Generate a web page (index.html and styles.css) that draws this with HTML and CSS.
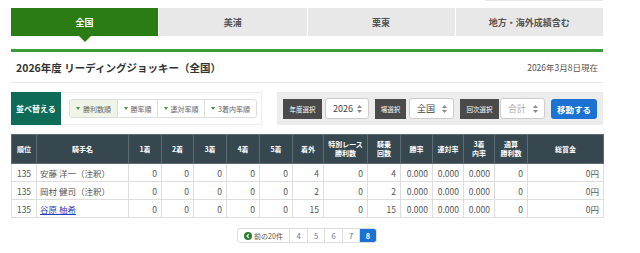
FILE: index.html
```html
<!DOCTYPE html>
<html lang="ja">
  <head>
    <meta charset="UTF-8" />
    <meta name="viewport" content="width=device-width, initial-scale=1.0" />
    <title>リーディングジョッキー</title>
    <link rel="stylesheet" href="styles.css">
  </head>
  <body>
    <div class="page">
      <div class="topbar"><div class="search-edge"></div></div>

      <ul class="tabs">
        <li class="tab active">全国</li>
        <li class="tab">美浦</li>
        <li class="tab">栗東</li>
        <li class="tab">地方・海外成績含む</li>
      </ul>
      <div class="rule"></div>

      <div class="heading">
        <h1>2026年度 リーディングジョッキー（全国）</h1>
        <span class="date">2026年3月8日現在</span>
      </div>

      <div class="controls">
        <div class="sort">
          <span class="sort-label">並べ替える</span>
          <div class="sort-btns">
            <span class="sort-btn current w47">勝利数順</span>
            <span class="sort-btn w40">勝率順</span>
            <span class="sort-btn w47">連対率順</span>
            <span class="sort-btn w52">3着内率順</span>
          </div>
        </div>

        <div class="filter">
          <span class="f-label w39">年度選択</span>
          <span class="f-select w44">2026<svg class="arrows" viewBox="0 0 5 8" width="5" height="8"><polygon points="0,3 2.5,0 5,3" /><polygon points="0,5 2.5,8 5,5" /></svg></span>
          <span class="f-label w31">場選択</span>
          <span class="f-select w45">全国<svg class="arrows" viewBox="0 0 5 8" width="5" height="8"><polygon points="0,3 2.5,0 5,3" /><polygon points="0,5 2.5,8 5,5" /></svg></span>
          <span class="f-label w39 tight">回次選択</span>
          <span class="f-select w45 disabled">合計<svg class="arrows" viewBox="0 0 5 8" width="5" height="8"><polygon points="0,3 2.5,0 5,3" /><polygon points="0,5 2.5,8 5,5" /></svg></span>
          <span class="go-btn">移動する</span>
        </div>
      </div>

      <table class="ranking">
        <colgroup>
          <col style="width:25px"><col style="width:92px"><col style="width:33px"><col style="width:32px">
          <col style="width:33px"><col style="width:33px"><col style="width:33px"><col style="width:31px">
          <col style="width:44px"><col style="width:33px"><col style="width:32px"><col style="width:31px">
          <col style="width:31px"><col style="width:33px"><col style="width:76px">
        </colgroup>
        <thead>
          <tr>
            <th>順位</th><th>騎手名</th><th>1着</th><th>2着</th><th>3着</th><th>4着</th><th>5着</th><th>着外</th>
            <th>特別レース<br>勝利数</th><th>騎乗<br>回数</th><th>勝率</th><th>連対率</th><th>3着<br>内率</th><th>通算<br>勝利数</th><th>総賞金</th>
          </tr>
        </thead>
        <tbody>
          <tr>
            <td class="rank">135</td><td class="name">安藤 洋一（注釈）</td>
            <td>0</td><td>0</td><td>0</td><td>0</td><td>0</td><td>4</td><td>0</td><td>4</td>
            <td>0.000</td><td>0.000</td><td>0.000</td><td>0</td><td>0円</td>
          </tr>
          <tr>
            <td class="rank">135</td><td class="name">岡村 健司（注釈）</td>
            <td>0</td><td>0</td><td>0</td><td>0</td><td>0</td><td>2</td><td>0</td><td>2</td>
            <td>0.000</td><td>0.000</td><td>0.000</td><td>0</td><td>0円</td>
          </tr>
          <tr>
            <td class="rank">135</td><td class="name"><a href="#">谷原 柚希</a></td>
            <td>0</td><td>0</td><td>0</td><td>0</td><td>0</td><td>15</td><td>0</td><td>15</td>
            <td>0.000</td><td>0.000</td><td>0.000</td><td>0</td><td>0円</td>
          </tr>
        </tbody>
      </table>

      <nav class="pager">
        <ul>
          <li class="prev"><span class="prev-icon"><svg viewBox="0 0 8 8" width="8" height="8"><circle cx="4" cy="4" r="4" fill="#2e7d32" /><polyline points="4.8,2.2 3,4 4.8,5.8" fill="none" stroke="#fff" stroke-width="1.2" /></svg></span>前の20件</li>
          <li class="w18">4</li>
          <li class="w17">5</li>
          <li class="w18">6</li>
          <li class="w17">7</li>
          <li class="w17 active">8</li>
        </ul>
      </nav>
    </div>
  </body>
</html>
```

FILE: styles.css
```css
/* Reset */
* {
  margin: 0;
  padding: 0;
  box-sizing: border-box;
}

body {
  font-family: "Noto Sans CJK JP", "Noto Sans", sans-serif;
  color: #333;
  background: #fff;
}

.page {
  width: 592px;
  margin-left: 11px;
}

/* top strip (edge of the search box above) */
.topbar {
  display: flex;
  justify-content: flex-end;
  height: 8px;
}

.search-edge {
  width: 118px;
  height: 1px;
  background: #e8e8e8;
}

/* Tabs */
.tabs {
  display: flex;
  gap: 1px;
  list-style: none;
  height: 28px;
}

.tab {
  flex: 1;
  display: flex;
  align-items: center;
  justify-content: center;
  background: #e8e8e8;
  color: #555;
  font-size: 9px;
  font-weight: bold;
  position: relative;
}

.tab.active {
  background: #2b7d13;
  color: #fff;
}

.tab.active::after {
  content: "";
  position: absolute;
  top: 100%;
  left: 50%;
  margin-left: -6px;
  border: 6px solid transparent;
  border-top-color: #2b7d13;
  border-bottom: 0;
}

.rule {
  height: 3px;
  background: #3a9b3a;
  margin-top: 13px;
}

/* Heading */
.heading {
  display: flex;
  justify-content: space-between;
  align-items: center;
  height: 31px;
  padding: 0 5px;
  border-bottom: 1px solid #e6e6e6;
}

.heading h1 {
  font-size: 10.5px;
  font-weight: bold;
  color: #333;
}

.date {
  font-size: 8.5px;
  color: #555;
}

/* Controls */
.controls {
  display: flex;
  justify-content: space-between;
  height: 33px;
  margin-top: 9px;
}

.sort {
  display: flex;
  align-items: center;
  width: 251px;
  border: 1px solid #eee;
  border-left: 0;
}

.sort-label {
  align-self: stretch;
  width: 50px;
  margin: -1px 0;
  display: flex;
  align-items: center;
  justify-content: center;
  background: #0d6b57;
  color: #fff;
  font-size: 8px;
  font-weight: bold;
}

.sort-btns {
  display: flex;
  height: 19px;
  margin-left: 8px;
  border: 1px solid #ddd;
  border-radius: 3px;
  overflow: hidden;
}

.sort-btn {
  display: flex;
  align-items: center;
  justify-content: center;
  font-size: 7px;
  color: #666;
  border-left: 1px solid #ddd;
}

.sort-btn:first-child {
  border-left: 0;
}

.sort-btn::before {
  content: "";
  border: 2.5px solid transparent;
  border-top: 3px solid #3b9a3b;
  border-bottom: 0;
  margin-right: 3px;
}

.sort-btn.current {
  background: #eef4e6;
}

.w17 { width: 17px; }
.w18 { width: 18px; }
.w31 { width: 31px; }
.w39 { width: 39px; }
.w40 { width: 40px; }
.w44 { width: 44px; }
.w45 { width: 45px; }
.w47 { width: 47px; }
.w52 { width: 52px; }

.filter {
  display: flex;
  align-items: center;
  width: 326px;
  padding: 0 6px;
  background: #ececec;
}

.f-label {
  height: 20px;
  display: flex;
  align-items: center;
  justify-content: center;
  background: #4a4a4a;
  color: #fff;
  font-size: 6.5px;
  margin-right: 3px;
}

.f-label.tight {
  margin-right: 1px;
}

.f-select {
  height: 21px;
  display: flex;
  align-items: center;
  justify-content: space-between;
  padding: 0 6px 0 7px;
  background: #fff;
  border: 1px solid #ccc;
  border-radius: 3px;
  font-size: 9px;
  color: #444;
  margin-right: 6px;
}

.f-select.disabled {
  color: #aaa;
}

.arrows {
  fill: #888;
}

.go-btn {
  width: 46px;
  height: 20px;
  display: flex;
  align-items: center;
  justify-content: center;
  background: #1b72d2;
  border-radius: 3px;
  color: #fff;
  font-size: 8.5px;
  font-weight: bold;
}

/* Table */
.ranking {
  width: 100%;
  table-layout: fixed;
  border-collapse: collapse;
  margin-top: 9px;
}

.ranking th {
  height: 29px;
  background: #37474f;
  color: #fff;
  font-size: 7px;
  font-weight: bold;
  line-height: 9px;
  border: 1px solid #5e6d74;
  text-align: center;
}

.ranking td {
  height: 18px;
  padding: 0 4px;
  border: 1px solid #ddd;
  font-size: 8.5px;
  color: #555;
  text-align: right;
  white-space: nowrap;
}

.ranking td.rank {
  text-align: center;
  padding: 0;
}

.ranking td.name {
  text-align: left;
  padding-left: 3px;
}

.ranking a {
  color: #1f3fc4;
}

/* Pager */
.pager {
  display: flex;
  justify-content: center;
  margin-top: 10px;
}

.pager ul {
  display: flex;
  list-style: none;
  height: 15px;
  border: 1px solid #ddd;
  border-radius: 3px;
  overflow: hidden;
}

.pager li {
  display: flex;
  align-items: center;
  justify-content: center;
  border-left: 1px solid #ddd;
  font-size: 7.5px;
  color: #58779a;
}

.pager li:first-child {
  border-left: 0;
}

.pager .prev {
  width: 51px;
  color: #555;
  font-size: 7px;
}

.prev-icon {
  display: flex;
  margin-right: 2px;
}

.pager .active {
  background: #1b72d2;
  color: #fff;
  font-weight: bold;
}
```
